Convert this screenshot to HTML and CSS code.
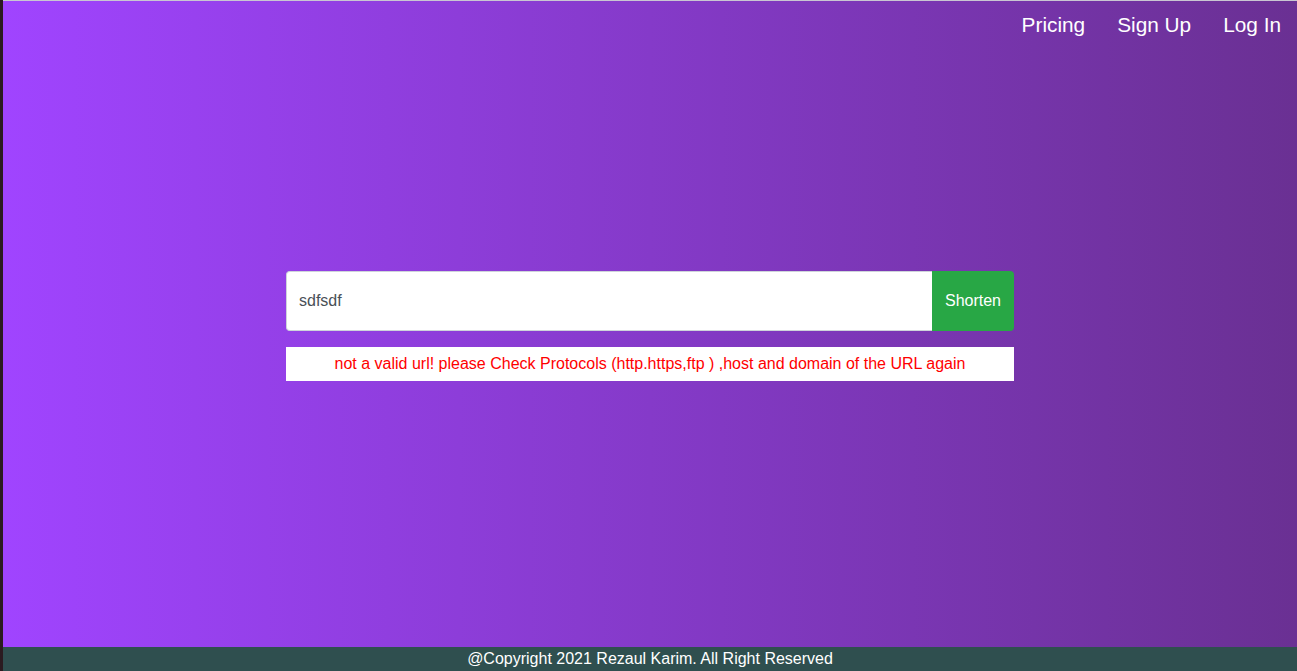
FILE: index.html
```html
<!DOCTYPE html>
<html lang="en">
<head>
<meta charset="utf-8">
<title>URL Shortener</title>
<link rel="stylesheet" href="styles.css">
</head>
<body>
<div class="frame">
  <div class="edge"></div>
  <div class="page">
    <header class="header">
      <nav class="nav">
        <a href="#" class="nav-link">Pricing</a>
        <a href="#" class="nav-link">Sign Up</a>
        <a href="#" class="nav-link">Log In</a>
      </nav>
    </header>
    <main class="main">
      <div class="shortener">
        <form class="input-group">
          <input class="url-input" type="text" value="sdfsdf">
          <button class="btn-shorten" type="button">Shorten</button>
        </form>
        <div class="error">not a valid url! please Check Protocols (http.https,ftp ) ,host and domain of the URL again</div>
      </div>
    </main>
    <footer class="footer">@Copyright 2021 Rezaul Karim. All Right Reserved</footer>
  </div>
</div>
</body>
</html>
```
FILE: styles.css
```css
html, body {
  margin: 0;
  padding: 0;
  height: 100%;
}
body {
  font-family: "Liberation Sans", Arial, sans-serif;
  background: #2b1b20;
}
.frame {
  display: flex;
  height: 100%;
}
.edge {
  width: 3px;
  flex: none;
  background: #2b1b20;
}
.page {
  flex: 1;
  display: flex;
  flex-direction: column;
  border-top: 1px solid #c9c6d2;
  background: linear-gradient(to right, #a044ff, #6a3093);
}
.header {
  height: 48px;
  display: flex;
  justify-content: flex-end;
  align-items: center;
}
.nav {
  display: flex;
  gap: 32px;
  padding-right: 16px;
}
.nav-link {
  color: #ffffff;
  font-size: 20.8px;
  text-decoration: none;
  line-height: 24px;
}
.main {
  flex: 1;
  display: flex;
  justify-content: center;
  padding-top: 222px;
}
.shortener {
  width: 728px;
  display: flex;
  flex-direction: column;
  gap: 16px;
}
.input-group {
  display: flex;
  height: 60px;
  margin: 0;
}
.url-input {
  flex: 1;
  box-sizing: border-box;
  height: 60px;
  border: 1px solid #ced4da;
  border-right: none;
  border-radius: 4px 0 0 4px;
  padding: 0 12px;
  font-family: "Liberation Sans", Arial, sans-serif;
  font-size: 16px;
  color: #495057;
  background: #ffffff;
  outline: none;
}
.btn-shorten {
  width: 82px;
  flex: none;
  border: none;
  border-radius: 0 4px 4px 0;
  background: #28a745;
  color: #ffffff;
  font-family: "Liberation Sans", Arial, sans-serif;
  font-size: 16px;
  padding: 0;
}
.error {
  height: 34px;
  background: #ffffff;
  color: #ff0000;
  font-size: 16px;
  display: flex;
  align-items: center;
  justify-content: center;
}
.footer {
  height: 24px;
  background: #2f4f4f;
  color: #ffffff;
  font-size: 16px;
  line-height: 24px;
  text-align: center;
}
```
